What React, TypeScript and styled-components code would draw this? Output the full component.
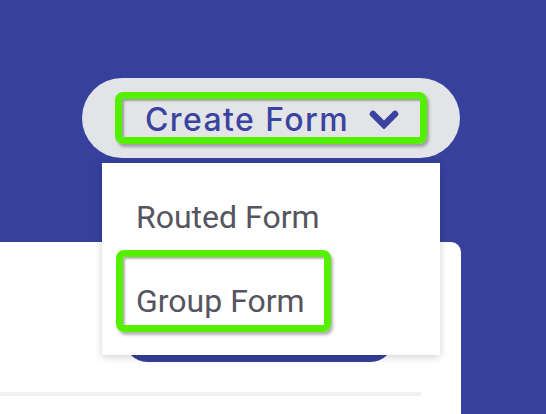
import React from 'react';
import styled, { createGlobalStyle } from 'styled-components';

const GlobalStyle = createGlobalStyle`
  html, body {
    margin: 0;
    padding: 0;
    background-color: #36419d;
  }
  * {
    box-sizing: border-box;
  }
`;

const Page = styled.div`
  width: 546px;
  height: 414px;
  overflow: hidden;
  background-color: #36419d;
`;
const Header = styled.div`
  display: flex;
  justify-content: flex-end;
  padding: 78px 86px 0 0;
`;
const PillWrap = styled.div`
  position: relative;
`;
const Pill = styled.div`
  display: flex;
  align-items: center;
  justify-content: center;
  width: 378px;
  height: 80px;
  border-radius: 40px;
  background-color: #e3e4e7;
`;
const Highlight = styled.div<{ $on?: boolean }>`
  border: 7px solid ${props => props.$on ? '#56ef00' : 'transparent'};
  border-radius: 8px;
  box-shadow: ${props => props.$on
    ? '2px 3px 3px rgba(0, 0, 0, 0.3), inset 2px 2px 2px rgba(0, 0, 0, 0.3)'
    : 'none'};
`;
const CreateButton = styled(Highlight)`
  display: flex;
  align-items: center;
  gap: 20px;
  width: 312px;
  height: 52px;
  padding: 3px 0 0 23px;
  color: #3a44a0;
  font-family: Inter, 'Noto Sans', sans-serif;
  font-weight: 500;
  font-size: 32px;
  letter-spacing: 1.4px;
`;
const Chevron = styled.svg`
  width: 30px;
  height: 19px;
  flex: none;
`;
const Menu = styled.div`
  position: absolute;
  top: 85px;
  left: 20px;
  display: flex;
  flex-direction: column;
  align-items: flex-start;
  gap: 2px;
  width: 338px;
  padding: 3px 0 23px 14px;
  background-color: #ffffff;
  box-shadow: 0 2px 8px rgba(0, 0, 0, 0.18);
  z-index: 2;
`;
const MenuItem = styled(Highlight)`
  height: 82px;
  padding: 26px 19px 0 13px;
  color: #55555f;
  font-family: Roboto, 'Liberation Sans', sans-serif;
  font-size: 32px;
  line-height: 36px;
`;
const Card = styled.div`
  margin: 84px 85px 0 0;
  height: 200px;
  padding-top: 76px;
  background-color: #ffffff;
  border-top-right-radius: 10px;
`;
const PrimaryButton = styled.div`
  width: 268px;
  height: 44px;
  margin-left: 125px;
  border-radius: 22px;
  background-color: #36419d;
`;
const Divider = styled.div`
  width: 421px;
  height: 4px;
  margin-top: 30px;
  background-color: #f1f1f1;
`;

const App = () => (
  <Page>
    <GlobalStyle/>
    <Header>
      <PillWrap>
        <Pill>
          <CreateButton $on>
            <span>Create Form</span>
            <Chevron viewBox="0 0 30 19">
              <path d="M4 4 L15 15 L26 4" fill="none" stroke="#3a44a0" strokeWidth="6.5" strokeLinecap="round"/>
            </Chevron>
          </CreateButton>
        </Pill>
        <Menu>
          <MenuItem>Routed Form</MenuItem>
          <MenuItem $on>Group Form</MenuItem>
        </Menu>
      </PillWrap>
    </Header>
    <Card>
      <PrimaryButton/>
      <Divider/>
    </Card>
  </Page>
);

export default App;
